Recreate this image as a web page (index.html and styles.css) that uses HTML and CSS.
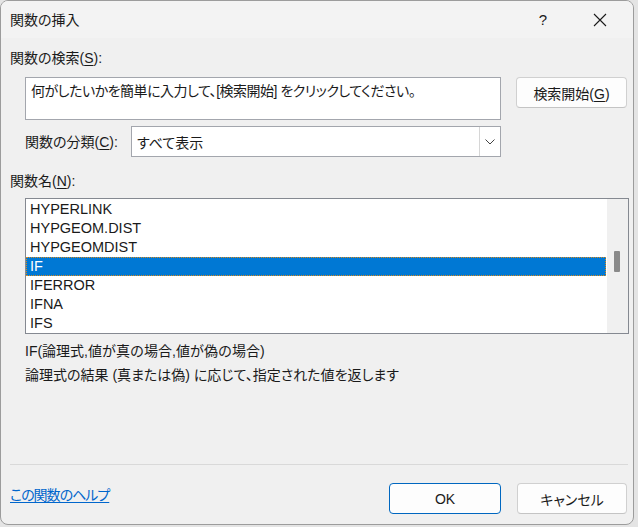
FILE: index.html
```html
<!DOCTYPE html>
<html lang="ja">
<head>
    <meta charset="UTF-8">
    <meta name="viewport" content="width=device-width, initial-scale=1.0">
    <title>関数の挿入</title>
    <link rel="stylesheet" href="styles.css">
</head>
<body>
    <div class="window">
        <header class="titlebar">
            <span class="title">関数の挿入</span>
            <span class="title-help">?</span>
            <span class="title-close">
                <svg viewBox="0 0 14 14" width="14" height="14">
                    <path d="M1 1L13 13M13 1L1 13" stroke="#1a1a1a" stroke-width="1.1" fill="none"/>
                </svg>
            </span>
        </header>

        <div class="content">
            <div class="label">関数の検索(<u>S</u>):</div>

            <div class="search-row">
                <div class="search-box">何がしたいかを簡単に入力して、[検索開始] をクリックしてください。</div>
                <button class="button search-button">検索開始(<u>G</u>)</button>
            </div>

            <div class="category-row">
                <span class="category-label">関数の分類(<u>C</u>):</span>
                <div class="select">
                    <span class="select-value">すべて表示</span>
                    <span class="select-arrow">
                        <svg viewBox="0 0 10 6" width="10" height="6">
                            <path d="M0.5 0.5L5 5L9.5 0.5" stroke="#444" stroke-width="1" fill="none"/>
                        </svg>
                    </span>
                </div>
            </div>

            <div class="label name-label">関数名(<u>N</u>):</div>

            <div class="listbox">
                <ul class="list">
                    <li>HYPERLINK</li>
                    <li>HYPGEOM.DIST</li>
                    <li>HYPGEOMDIST</li>
                    <li class="selected">IF</li>
                    <li>IFERROR</li>
                    <li>IFNA</li>
                    <li>IFS</li>
                </ul>
                <div class="scrollbar">
                    <div class="scroll-thumb"></div>
                </div>
            </div>

            <div class="syntax">IF(論理式,値が真の場合,値が偽の場合)</div>
            <div class="description">論理式の結果 (真または偽) に応じて、指定された値を返します</div>

            <div class="separator"></div>

            <footer class="footer">
                <a href="#" class="help-link">この関数のヘルプ</a>
                <div class="footer-buttons">
                    <button class="button ok-button">OK</button>
                    <button class="button cancel-button">キャンセル</button>
                </div>
            </footer>
        </div>
    </div>
</body>
</html>
```

FILE: styles.css
```css
:root {
    --dialog: #f0f0f0;
    --titlebar: #f3f3f3;
    --text: #1a1a1a;
    --border: #a3a6ad;
    --list-border: #858991;
    --accent: #0078d4;
    --link: #0066cc;
}

* {
    margin: 0;
    padding: 0;
    box-sizing: border-box;
}

body {
    background: #e4e4e4;
    width: 638px;
    height: 527px;
    overflow: hidden;
    font-family: "Liberation Sans", "Noto Sans CJK JP", sans-serif;
    font-size: 14px;
    font-feature-settings: "palt";
    color: var(--text);
}

.window {
    width: 634px;
    height: 525px;
    background: var(--dialog);
    border: 1px solid #9c9c9c;
    border-radius: 8px;
    overflow: hidden;
    display: flex;
    flex-direction: column;
}

.titlebar {
    height: 37px;
    background: var(--titlebar);
    display: flex;
    align-items: center;
    padding-left: 9px;
}

.title {
    flex: 1;
    line-height: 20px;
}

.title-help {
    width: 20px;
    text-align: center;
    font-size: 15px;
    margin-right: 40px;
}

.title-close {
    width: 14px;
    height: 14px;
    margin-right: 26px;
    display: flex;
}

.content {
    flex: 1;
    display: flex;
    flex-direction: column;
    padding: 10px 5px 10px 9px;
}

.label {
    line-height: 20px;
}

u {
    text-decoration-thickness: 1px;
    text-underline-offset: 2px;
}

.search-row {
    display: flex;
    align-items: flex-start;
    margin-top: 9px;
    padding-left: 15px;
}

.search-box {
    width: 476px;
    height: 43px;
    background: #fff;
    border: 1px solid var(--border);
    padding: 3px 5px;
    line-height: 20px;
    letter-spacing: -0.5px;
}

.button {
    font: inherit;
    color: var(--text);
    background: #fdfdfd;
    border: 1px solid #d0d0d0;
    border-bottom-color: #c4c4c4;
    border-radius: 4px;
    height: 31px;
}

.search-button {
    width: 111px;
    margin-left: 15px;
}

.category-row {
    display: flex;
    align-items: center;
    margin-top: 6px;
    padding-left: 15px;
}

.category-label {
    width: 106px;
    line-height: 20px;
}

.select {
    width: 370px;
    height: 31px;
    background: #fff;
    border: 1px solid var(--border);
    display: flex;
    align-items: center;
}

.select-value {
    flex: 1;
    padding-left: 5px;
}

.select-arrow {
    width: 21px;
    height: 29px;
    border-left: 1px solid #d6d6d6;
    display: flex;
    align-items: center;
    justify-content: center;
}

.name-label {
    margin-top: 14px;
}

.listbox {
    margin: 7px 0 0 15px;
    width: 604px;
    height: 136px;
    border: 1px solid var(--list-border);
    display: flex;
}

.list {
    list-style: none;
    flex: 1;
    background: #fff;
    padding-top: 1px;
    font-size: 14.5px;
}

.list li {
    height: 19px;
    line-height: 19px;
    padding-left: 4px;
}

.list .selected {
    background: var(--accent);
    color: #fff;
    outline: 1px dotted #d98a1c;
    outline-offset: -1px;
    margin-right: 1px;
}

.scrollbar {
    width: 21px;
    background: var(--dialog);
    padding: 52px 0 0 7px;
}

.scroll-thumb {
    width: 6px;
    height: 21px;
    background: #8a8a8a;
    border-radius: 1px;
}

.syntax {
    margin-top: 5px;
    padding-left: 15px;
    line-height: 24px;
    font-feature-settings: normal;
}

.description {
    padding-left: 15px;
    line-height: 24px;
}

.separator {
    margin-top: 77px;
    height: 1px;
    background: #d9d9d9;
    width: 618px;
}

.footer {
    display: flex;
    justify-content: space-between;
    margin-top: 18px;
}

.help-link {
    color: var(--link);
    text-decoration: underline;
    text-decoration-thickness: 1px;
    text-underline-offset: 2px;
    line-height: 20px;
    margin-top: 2px;
    letter-spacing: -1px;
}

.footer-buttons {
    display: flex;
    gap: 16px;
    margin-right: 1px;
}

.ok-button {
    width: 112px;
    border: 1px solid #0067c0;
    border-radius: 4px;
}

.cancel-button {
    width: 110px;
}
```
